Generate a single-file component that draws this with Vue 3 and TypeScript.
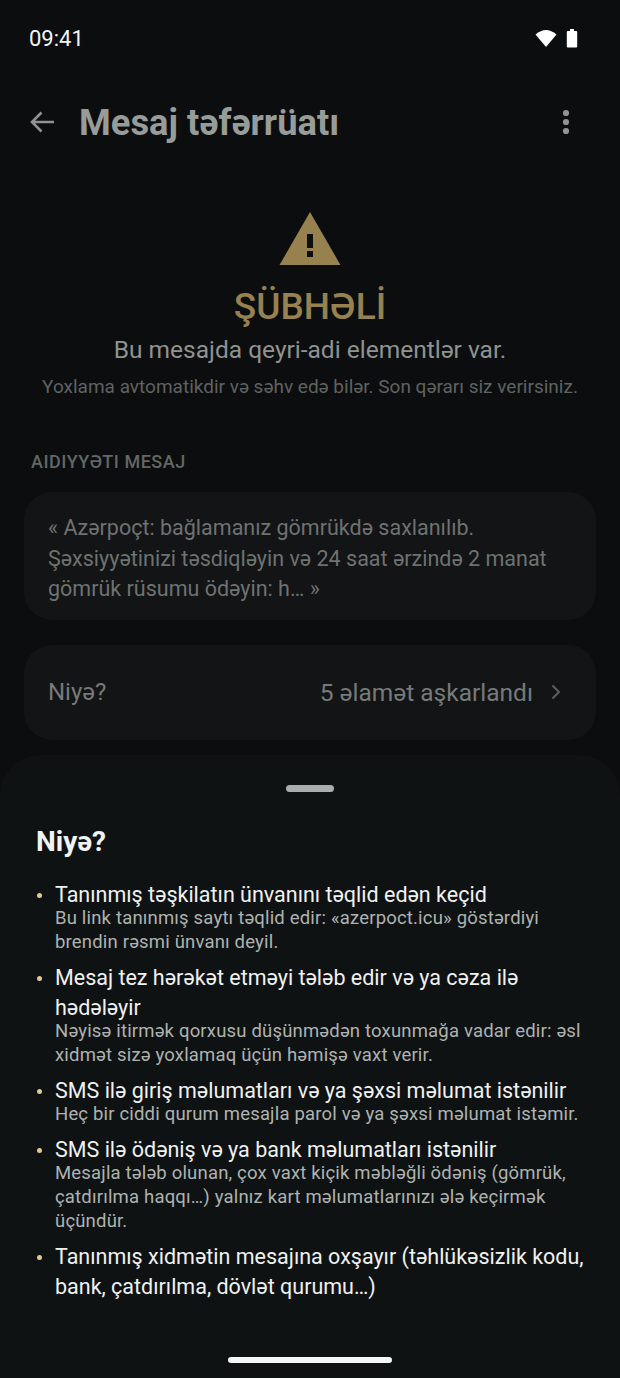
<script setup lang="ts">
interface Reason {
  title: string;
  detail?: string;
}

const reasons: Reason[] = [
  {
    title: 'Tanınmış təşkilatın ünvanını təqlid edən keçid',
    detail: 'Bu link tanınmış saytı təqlid edir: «azerpoct.icu» göstərdiyi brendin rəsmi ünvanı deyil.',
  },
  {
    title: 'Mesaj tez hərəkət etməyi tələb edir və ya cəza ilə hədələyir',
    detail: 'Nəyisə itirmək qorxusu düşünmədən toxunmağa vadar edir: əsl xidmət sizə yoxlamaq üçün həmişə vaxt verir.',
  },
  {
    title: 'SMS ilə giriş məlumatları və ya şəxsi məlumat istənilir',
    detail: 'Heç bir ciddi qurum mesajla parol və ya şəxsi məlumat istəmir.',
  },
  {
    title: 'SMS ilə ödəniş və ya bank məlumatları istənilir',
    detail: 'Mesajla tələb olunan, çox vaxt kiçik məbləğli ödəniş (gömrük, çatdırılma haqqı…) yalnız kart məlumatlarınızı ələ keçirmək üçündür.',
  },
  {
    title: 'Tanınmış xidmətin mesajına oxşayır (təhlükəsizlik kodu, bank, çatdırılma, dövlət qurumu…)',
  },
];
</script>

<template>
  <div class="screen">
    <div class="status">
      <span class="status__time">09:41</span>
      <div class="status__icons">
        <svg width="22" height="20" viewBox="0 0 22 20"><path d="M0.5 6.5 Q11 -2.5 21.5 6.5 L11 19 Z" fill="#fff" /></svg>
        <svg width="12" height="20" viewBox="0 0 12 20"><path d="M4 1h4v2h2.2q1 0 1 1v14.5q0 1-1 1H1.8q-1 0-1-1V4q0-1 1-1H4z" fill="#fff" /></svg>
      </div>
    </div>

    <div class="topbar">
      <svg class="topbar__back" width="26" height="26" viewBox="0 0 26 26" fill="none" stroke="#8f9391" stroke-width="2.6">
        <path d="M25 13H3M12.5 3.5 3 13l9.5 9.5" />
      </svg>
      <h1 class="topbar__title">Mesaj təfərrüatı</h1>
      <svg class="topbar__more" width="8" height="26" viewBox="0 0 8 26" fill="#8f9391">
        <circle cx="4" cy="4" r="3.1" /><circle cx="4" cy="13" r="3.1" /><circle cx="4" cy="22" r="3.1" />
      </svg>
    </div>

    <div class="verdict">
      <svg class="verdict__icon" width="62" height="54" viewBox="0 0 62 54">
        <path d="M31 0 61.500 53H0.500Z" fill="#96814f" />
        <rect x="28" y="22" width="6" height="14" fill="#0c0e0f" />
        <rect x="28" y="39" width="6" height="6" fill="#0c0e0f" />
      </svg>
      <div class="verdict__label">ŞÜBHƏLİ</div>
      <p class="verdict__text">Bu mesajda qeyri-adi elementlər var.</p>
      <p class="verdict__note">Yoxlama avtomatikdir və səhv edə bilər. Son qərarı siz verirsiniz.</p>
    </div>

    <div class="section-label">AIDIYYƏTI MESAJ</div>
    <div class="card card--message">
      « Azərpoçt: bağlamanız gömrükdə saxlanılıb. Şəxsiyyətinizi təsdiqləyin və 24 saat ərzində 2 manat gömrük rüsumu ödəyin: h… »
    </div>

    <div class="card card--row">
      <span>Niyə?</span>
      <span class="card__value">5 əlamət aşkarlandı</span>
      <svg width="10" height="16" viewBox="0 0 10 16" fill="none" stroke="#5c5f5e" stroke-width="2">
        <path d="m1.500 1.500 6.500 6.500-6.500 6.500" />
      </svg>
    </div>

    <div class="sheet">
      <div class="sheet__handle"></div>
      <h2 class="sheet__title">Niyə?</h2>
      <ul class="reasons">
        <li v-for="reason in reasons" :key="reason.title" class="reason">
          <span class="reason__dot"></span>
          <div>
            <div class="reason__title">{{ reason.title }}</div>
            <div v-if="reason.detail" class="reason__detail">{{ reason.detail }}</div>
          </div>
        </li>
      </ul>
      <div class="sheet__gesture"></div>
    </div>
  </div>
</template>

<style>
html,
body {
  margin: 0;
  background: #0b0d0e;
}
</style>

<style scoped>
.screen {
  position: relative;
  width: 620px;
  height: 1378px;
  overflow: hidden;
  background: #0b0d0e;
  font-family: Roboto, "Noto Sans", sans-serif;
  color: #8f9391;
}

.status {
  display: flex;
  align-items: center;
  justify-content: space-between;
  height: 76px;
  padding: 0 42px 0 29px;
  box-sizing: border-box;
}

.status__time {
  color: #f4f5f5;
  font-size: 22px;
}

.status__icons {
  display: flex;
  align-items: center;
  gap: 9px;
}

.topbar {
  display: flex;
  align-items: center;
  height: 92px;
  padding: 0 50px 0 29px;
}

.topbar__title {
  flex: 1;
  margin: 0 0 0 24px;
  font-size: 36.300px;
  font-weight: 700;
  color: #989c99;
}

.verdict {
  display: flex;
  flex-direction: column;
  align-items: center;
  padding-top: 44px;
}

.verdict__label {
  margin-top: 18px;
  font-size: 37px;
  line-height: 46px;
  font-weight: 500;
  color: #96814f;
}

.verdict__text {
  margin: 5px 0 0;
  font-size: 24.500px;
  line-height: 30px;
  color: #8f9391;
}

.verdict__note {
  margin: 9px 0 0;
  font-size: 19px;
  line-height: 26px;
  color: #5f6362;
}

.section-label {
  margin: 51px 0 0 31px;
  font-size: 18px;
  line-height: 22px;
  font-weight: 500;
  letter-spacing: 0.5px;
  color: #636766;
}

.card {
  margin: 0 24px;
  background: #121415;
  border-radius: 28px;
}

.card--message {
  margin-top: 19px;
  padding: 21px 24px 15px;
  font-size: 21.500px;
  line-height: 30.500px;
  color: #6e7271;
}

.card--row {
  display: flex;
  align-items: center;
  height: 95px;
  margin-top: 25px;
  padding: 0 35px 0 24px;
  font-size: 24px;
  color: #767a79;
}

.card__value {
  margin-left: auto;
  margin-right: 18px;
  font-size: 24.500px;
}

.sheet {
  position: absolute;
  left: 0;
  right: 0;
  top: 755px;
  bottom: 0;
  padding: 30px 36px 0 36px;
  background: #0f1213;
  border-radius: 40px 40px 0 0;
  color: #eceded;
}

.sheet__handle {
  width: 48px;
  height: 7px;
  margin: 0 auto;
  border-radius: 4px;
  background: #a9adab;
}

.sheet__title {
  margin: 32px 0 0;
  font-size: 28px;
  line-height: 36px;
  font-weight: 700;
  color: #f2f3f3;
}

.reasons {
  margin: 20px 0 0;
  padding: 0;
  list-style: none;
  display: flex;
  flex-direction: column;
  gap: 9px;
}

.reason {
  display: flex;
  gap: 13px;
}

.reason__dot {
  flex: none;
  width: 5px;
  height: 5px;
  margin: 13px 0 0 1px;
  border-radius: 50%;
  background: #e3c88f;
}

.reason__title {
  font-size: 21.500px;
  line-height: 30px;
  color: #f0f1f1;
}

.reason__detail {
  margin-top: -4px;
  font-size: 18.500px;
  line-height: 24px;
  letter-spacing: 0.18px;
  color: #aeb2b0;
}

.sheet__gesture {
  position: absolute;
  left: 228px;
  bottom: 15px;
  width: 164px;
  height: 6px;
  border-radius: 3px;
  background: #f4f5f5;
}
</style>
